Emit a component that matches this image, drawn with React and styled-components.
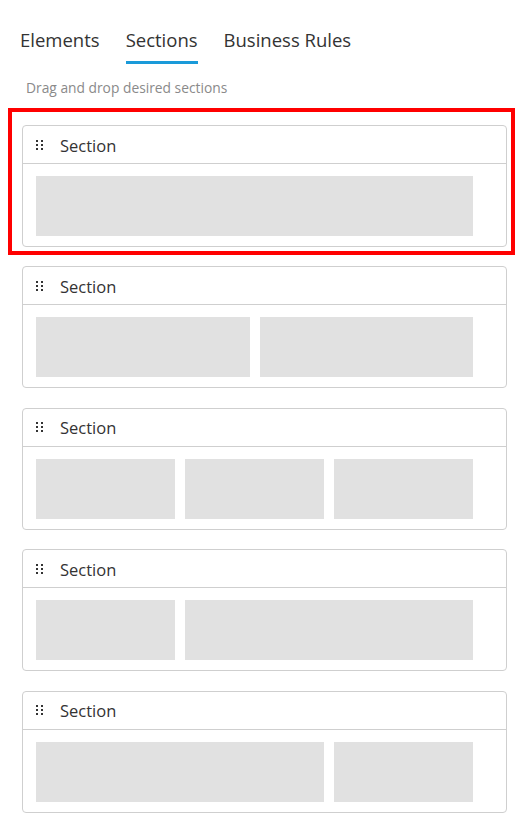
import React, { useState } from 'react';
import styled, { createGlobalStyle } from 'styled-components';

const GlobalStyle = createGlobalStyle`
  body {
    margin: 0;
    background: #fff;
    font-family: "Open Sans", "Noto Sans", sans-serif;
  }
`;

const Page = styled.div`
  padding: 27px 13px 12px 20px;
`;

const Tabs = styled.nav`
  display: flex;
  gap: 26px;
`;

const Tab = styled.button`
  border: none;
  background: none;
  padding: 0 0 9px;
  margin: 0;
  font-family: inherit;
  font-size: 18.5px;
  line-height: 25px;
  color: #333;
  cursor: pointer;
  border-bottom: 3px solid ${({ $active }) => ($active ? '#1a9ad9' : 'transparent')};
`;

const Hint = styled.p`
  margin: 15px 0 0 6px;
  font-size: 13.8px;
  line-height: 18px;
  color: #8a8a8a;
`;

const List = styled.div`
  display: flex;
  flex-direction: column;
  gap: 19.4px;
  margin: 28px 0 0 2px;
  width: 485px;
`;

const Card = styled.div`
  position: relative;
  border: 1px solid #cfcfcf;
  border-radius: 4px;
  background: #fff;
  cursor: grab;

  ${({ $selected }) =>
    $selected &&
    `
    &::after {
      content: '';
      position: absolute;
      top: -18px;
      left: -15px;
      right: -9px;
      bottom: -9px;
      border: 4px solid #ff0000;
      pointer-events: none;
    }
  `}
`;

const CardHeader = styled.div`
  display: flex;
  align-items: center;
  gap: 17px;
  height: 37px;
  padding-left: 13px;
  border-bottom: 1px solid #cfcfcf;
`;

const Title = styled.span`
  font-size: 16.5px;
  color: #333;
  padding-top: 1px;
`;

const Layout = styled.div`
  display: grid;
  grid-template-columns: repeat(6, 1fr);
  gap: 10px;
  padding: 12px 33px 10px 13px;
`;

const Block = styled.div`
  grid-column: span ${({ $span }) => $span};
  height: 60px;
  background: #e1e1e1;
`;

const GripIcon = () => (
  <svg width="7" height="10" viewBox="0 0 7 10">
    {[0, 4, 8].map((y) => (
      <g key={y} fill="#333">
        <rect x="0" y={y} width="2" height="2" />
        <rect x="5" y={y} width="2" height="2" />
      </g>
    ))}
  </svg>
);

const tabs = ['Elements', 'Sections', 'Business Rules'];

// column spans of each section layout on a 6-column grid
const sections = [
  [6],
  [3, 3],
  [2, 2, 2],
  [2, 4],
  [4, 2],
];

export default function App() {
  const [activeTab, setActiveTab] = useState('Sections');
  const [selected, setSelected] = useState(0);

  return (
    <Page>
      <GlobalStyle />
      <Tabs>
        {tabs.map((t) => (
          <Tab key={t} $active={t === activeTab} onClick={() => setActiveTab(t)}>
            {t}
          </Tab>
        ))}
      </Tabs>
      <Hint>Drag and drop desired sections</Hint>
      <List>
        {sections.map((cols, i) => (
          <Card key={i} $selected={i === selected} onClick={() => setSelected(i)}>
            <CardHeader>
              <GripIcon />
              <Title>Section</Title>
            </CardHeader>
            <Layout>
              {cols.map((span, j) => (
                <Block key={j} $span={span} />
              ))}
            </Layout>
          </Card>
        ))}
      </List>
    </Page>
  );
}
